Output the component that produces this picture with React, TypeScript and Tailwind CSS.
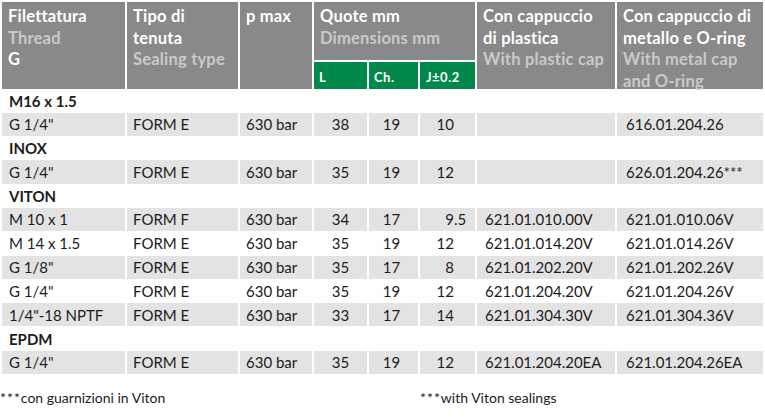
import React from 'react';

const cols = 'grid grid-cols-[123px_111px_72px_53px_49px_55px_138px_146px] gap-x-[2px]';

type Row = {
  thread: string;
  seal: string;
  l: string;
  ch: string;
  j: string;
  plastic: string;
  metal: string;
  shaded: boolean;
};

type Section = { title: string; rows: Row[] };

const sections: Section[] = [
  {
    title: 'M16 x 1.5',
    rows: [{ thread: 'G 1/4"', seal: 'FORM E', l: '38', ch: '19', j: '10', plastic: '', metal: '616.01.204.26', shaded: true }],
  },
  {
    title: 'INOX',
    rows: [{ thread: 'G 1/4"', seal: 'FORM E', l: '35', ch: '19', j: '12', plastic: '', metal: '626.01.204.26***', shaded: true }],
  },
  {
    title: 'VITON',
    rows: [
      { thread: 'M 10 x 1', seal: 'FORM F', l: '34', ch: '17', j: '9.5', plastic: '621.01.010.00V', metal: '621.01.010.06V', shaded: true },
      { thread: 'M 14 x 1.5', seal: 'FORM E', l: '35', ch: '19', j: '12', plastic: '621.01.014.20V', metal: '621.01.014.26V', shaded: false },
      { thread: 'G 1/8"', seal: 'FORM E', l: '35', ch: '17', j: '8', plastic: '621.01.202.20V', metal: '621.01.202.26V', shaded: true },
      { thread: 'G 1/4"', seal: 'FORM E', l: '35', ch: '19', j: '12', plastic: '621.01.204.20V', metal: '621.01.204.26V', shaded: false },
      { thread: '1/4"-18 NPTF', seal: 'FORM E', l: '33', ch: '17', j: '14', plastic: '621.01.304.30V', metal: '621.01.304.36V', shaded: true },
    ],
  },
  {
    title: 'EPDM',
    rows: [{ thread: 'G 1/4"', seal: 'FORM E', l: '35', ch: '19', j: '12', plastic: '621.01.204.20EA', metal: '621.01.204.26EA', shaded: true }],
  },
];

function Cell({ shaded, className = '', children }: { shaded: boolean; className?: string; children?: React.ReactNode }) {
  return (
    <div className={`${shaded ? 'bg-[#e3e3e3]' : 'bg-white'} flex items-center h-full whitespace-nowrap ${className}`}>
      {children}
    </div>
  );
}

function DataRow({ row }: { row: Row }) {
  const [int, dec] = row.j.split('.');
  return (
    <div className={`${cols} h-[23.8px] pb-[0.5px]`}>
      <Cell shaded={row.shaded} className="pl-[7px]">{row.thread}</Cell>
      <Cell shaded={row.shaded} className="pl-[6px]">{row.seal}</Cell>
      <Cell shaded={row.shaded} className="pl-[6px]">630 bar</Cell>
      <Cell shaded={row.shaded} className="justify-center">{row.l}</Cell>
      <Cell shaded={row.shaded} className="justify-center pr-[4px]">{row.ch}</Cell>
      <Cell shaded={row.shaded}>
        <span className="w-[34px] text-right">{int}</span>
        {dec && <span>.{dec}</span>}
      </Cell>
      <Cell shaded={row.shaded} className="pl-[8px]">{row.plastic}</Cell>
      <Cell shaded={row.shaded} className="pl-[9px]">{row.metal}</Cell>
    </div>
  );
}

type Line = { t: string; en?: boolean };

function HeadCell({ lines, className = '' }: { lines: Line[]; className?: string }) {
  return (
    <div className={`row-span-2 bg-[#898989] pt-[4px] pl-[6px] leading-[21.5px] ${className}`}>
      {lines.map((l) => (
        <div key={l.t} className={`${l.en ? 'text-[#cacaca]' : 'text-white'} whitespace-nowrap`}>{l.t}</div>
      ))}
    </div>
  );
}

export default function App() {
  return (
    <div className="w-[765px] h-[418px] bg-white pt-[2px] pl-[2px] text-[#1c1c1c] text-[15px] font-['Lato','Liberation_Sans',sans-serif]">
      <div className={`${cols} grid-rows-[58px_27px] gap-y-[2px] font-bold text-[16.5px] tracking-[0.2px]`}>
        <HeadCell lines={[{ t: 'Filettatura' }, { t: 'Thread', en: true }, { t: 'G' }]} />
        <HeadCell lines={[{ t: 'Tipo di' }, { t: 'tenuta' }, { t: 'Sealing type', en: true }]} />
        <HeadCell lines={[{ t: 'p max' }]} />
        <div className="col-span-3 bg-[#898989] pt-[4px] pl-[6px] leading-[21.5px]">
          <div className="text-white">Quote mm</div>
          <div className="text-[#cacaca]">Dimensions mm</div>
        </div>
        <HeadCell
          lines={[{ t: 'Con cappuccio' }, { t: 'di plastica' }, { t: 'With plastic cap', en: true }]}
          className="col-start-7 row-start-1"
        />
        <HeadCell
          lines={[{ t: 'Con cappuccio di' }, { t: 'metallo e O-ring' }, { t: 'With metal cap', en: true }, { t: 'and O-ring', en: true }]}
          className="col-start-8 row-start-1"
        />
        <div className="col-start-4 row-start-2 bg-[#00894b] text-white text-[13px] tracking-[0.5px] pl-[5px] pt-[6px]">L</div>
        <div className="col-start-5 row-start-2 bg-[#00894b] text-white text-[13px] tracking-[0.5px] pl-[5px] pt-[6px]">Ch.</div>
        <div className="col-start-6 row-start-2 bg-[#00894b] text-white text-[13px] tracking-[0.5px] pl-[6px] pt-[6px]">J±0.2</div>
      </div>
      {sections.map((s) => (
        <div key={s.title}>
          <div className="h-[23.8px] flex items-center pl-[7px] font-bold">{s.title}</div>
          {s.rows.map((r, i) => (
            <DataRow key={i} row={r} />
          ))}
        </div>
      ))}
      <div className={`${cols} mt-[12px] text-[14px]`}>
        <div className="col-span-5 -ml-[2px]">
          <span className="tracking-[1px]">***</span>con guarnizioni in Viton
        </div>
        <div className="col-span-3">
          <span className="tracking-[1px]">***</span>with Viton sealings
        </div>
      </div>
    </div>
  );
}
